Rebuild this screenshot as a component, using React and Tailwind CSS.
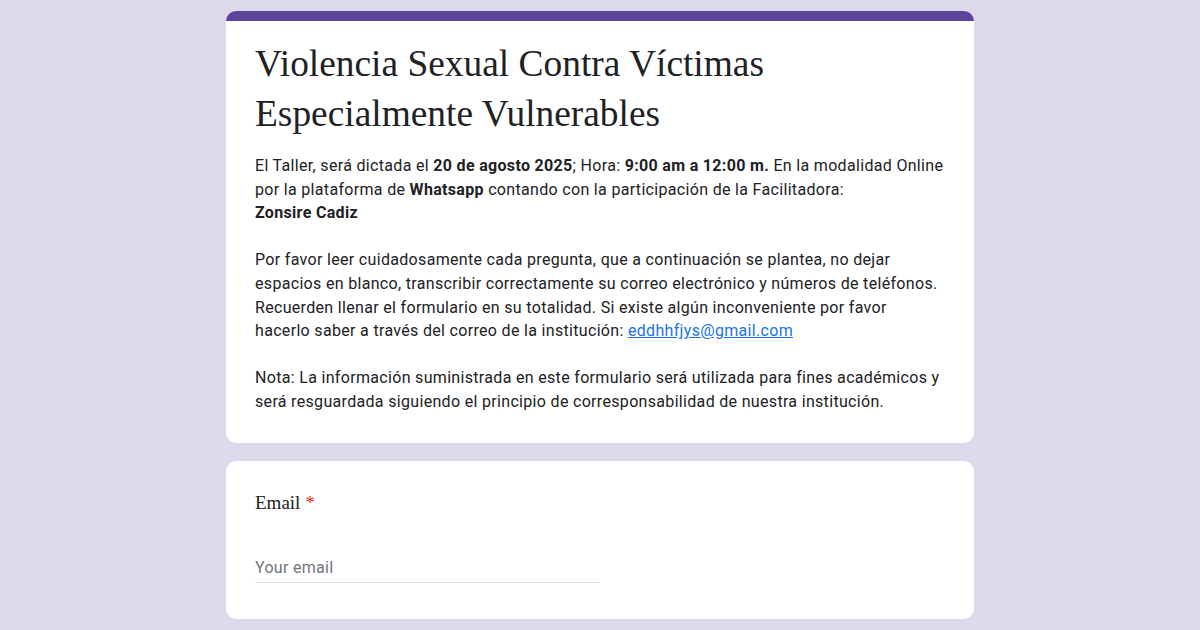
const serif = { fontFamily: '"Liberation Serif", "Times New Roman", serif' };

const App = () => {
  return (
    <div className="min-h-[630px] bg-[#ddd8ea] pt-[11px] flex flex-col items-center">
      <div className="w-[748px] flex flex-col gap-[18px]">
        <div className="rounded-[10px] bg-white overflow-hidden">
          <div className="h-[10px] bg-[#5b4499]" />
          <div className="px-[29px] pt-[18px] pb-[29px] font-['Roboto',sans-serif] text-[#202124]">
            <h1 style={serif} className="text-[37.4px] leading-[50px] text-[#202124]">
              Violencia Sexual Contra Víctimas
              <br />
              Especialmente Vulnerables
            </h1>
            <div className="mt-[15px] text-[16px] leading-[23.6px] tracking-[0.32px]">
              <p>
                El Taller, será dictada el <b className="font-bold">20 de agosto 2025</b>; Hora: <b className="font-bold">9:00 am a 12:00 m.</b> En la modalidad Online
                <br />
                por la plataforma de <b className="font-bold">Whatsapp</b> contando con la participación de la Facilitadora:
                <br />
                <b className="font-bold">Zonsire Cadiz</b>
              </p>
              <p className="mt-[23.6px]">
                Por favor leer cuidadosamente cada pregunta, que a continuación se plantea, no dejar
                <br />
                espacios en blanco, transcribir correctamente su correo electrónico y números de teléfonos.
                <br />
                Recuerden llenar el formulario en su totalidad. Si existe algún inconveniente por favor
                <br />
                hacerlo saber a través del correo de la institución:{' '}
                <a className="text-[#1a73e8] underline">eddhhfjys@gmail.com</a>
              </p>
              <p className="mt-[23.6px]">
                Nota: La información suministrada en este formulario será utilizada para fines académicos y
                <br />
                será resguardada siguiendo el principio de corresponsabilidad de nuestra institución.
              </p>
            </div>
          </div>
        </div>

        <div className="rounded-[10px] bg-white px-[29px] pt-[30px] pb-[36px]">
          <div style={serif} className="text-[19px] leading-[24px] text-[#202124]">
            Email <span className="text-[#d93025]">*</span>
          </div>
          <div className="mt-[41px] w-[345px] border-b border-[#e0e0e0] pb-[2px] font-['Roboto',sans-serif] text-[16px] leading-[24px] tracking-[0.3px] text-[#70757a]">
            Your email
          </div>
        </div>
      </div>
    </div>
  );
};

export default App;
